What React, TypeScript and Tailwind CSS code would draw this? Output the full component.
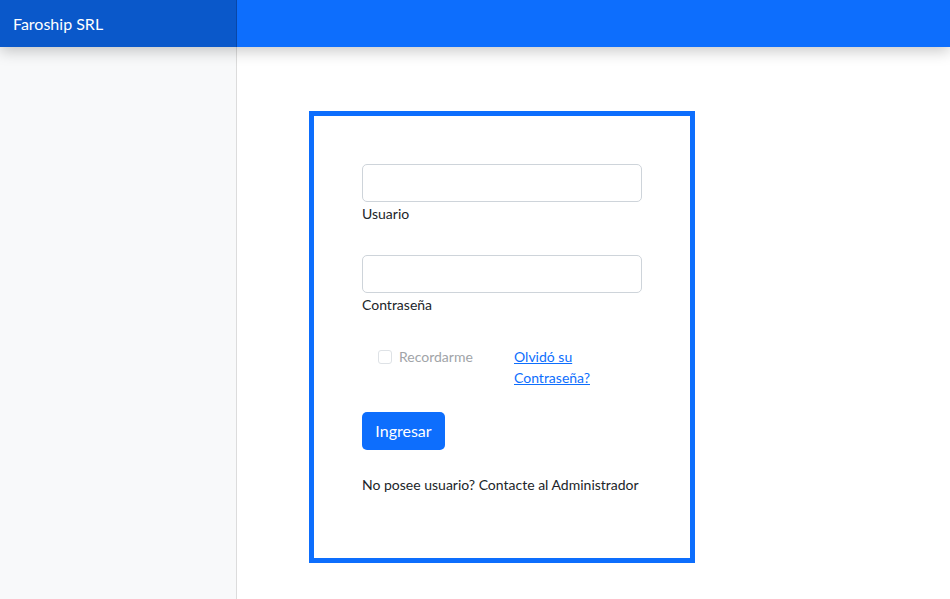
import React from "react";

export default function App() {
  return (
    <div className="w-[950px] h-[599px] overflow-hidden bg-white flex flex-col text-[#212529]" style={{ fontFamily: 'Lato, "Noto Sans", sans-serif' }}>
      <header className="h-[47px] flex shrink-0 bg-[#0d6efd] relative z-10 shadow-[0_4px_14px_rgba(0,0,0,0.22)]">
        <div className="w-[237px] bg-[#0a58ca] border-r border-[#0847a8] flex items-center pl-[13px] text-white text-[16px]">
          Faroship SRL
        </div>
      </header>
      <div className="flex flex-1 min-h-0">
        <aside className="w-[237px] bg-[#f8f9fa] border-r border-[#dcdcdc] shrink-0" />
        <main className="flex-1 pl-[72px] pt-[64px]">
          <div className="w-[386px] h-[452px] border-[5px] border-[#0d6efd] px-[48px] pt-[48px] text-[14px]">
            <input className="block w-[280px] h-[38px] border border-[#ced4da] rounded-[5px] outline-none" />
            <label className="block leading-[21px] mt-[1px]">Usuario</label>
            <input className="block w-[280px] h-[38px] border border-[#ced4da] rounded-[5px] outline-none mt-[31px]" />
            <label className="block leading-[21px] mt-[1px]">Contraseña</label>
            <div className="flex mt-[31px]">
              <div className="w-[140px] pl-[16px] flex items-start">
                <span className="w-[14px] h-[14px] mt-[4px] border border-[#dee2e6] rounded-[3px] bg-white shrink-0" />
                <span className="ml-[7px] leading-[21px] text-[#a1a4a8]">Recordarme</span>
              </div>
              <div className="w-[140px] pl-[12px] pr-[12px]">
                <a href="#" className="text-[#0d6efd] underline leading-[21px] block">Olvidó su Contraseña?</a>
              </div>
            </div>
            <button className="mt-[24px] h-[38px] w-[83px] bg-[#0d6efd] text-white rounded-[5px] text-[16px]">Ingresar</button>
            <p className="mt-[24px] leading-[21px]">No posee usuario? Contacte al Administrador</p>
          </div>
        </main>
      </div>
    </div>
  );
}
